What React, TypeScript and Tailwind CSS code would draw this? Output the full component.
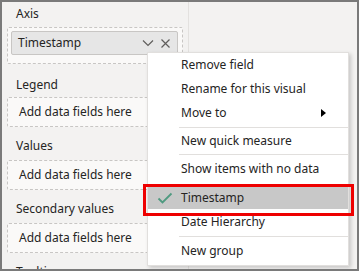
import { ReactNode } from 'react';

const font = { fontFamily: '"Segoe UI", "Noto Sans", "Liberation Sans", sans-serif' };

function Label({ children, className = '' }: { children: ReactNode; className?: string }) {
  return <div className={`h-[20px] shrink-0 pl-[9px] text-[12px] leading-[20px] text-[#252423] ${className}`}>{children}</div>;
}

function DropZone({ className = '' }: { className?: string }) {
  return (
    <div
      className={`flex h-[30px] shrink-0 items-center rounded-[2px] border border-dashed border-[#c8c6c4] bg-[#faf9f8] pl-[11px] text-[12px] text-[#252423] ${className}`}
    >
      Add data fields here
    </div>
  );
}

function MenuItem({ children, className = '' }: { children: ReactNode; className?: string }) {
  return <div className={`flex shrink-0 items-center pl-[33px] text-[12px] text-[#252423] ${className}`}>{children}</div>;
}

function Sep() {
  return <div className="ml-[31px] h-px shrink-0 bg-[#e1dfdd]" />;
}

export default function App() {
  return (
    <div className="h-[274px] w-[362px] bg-white" style={font}>
      <div className="relative h-[271px] w-[359px] overflow-hidden border-2 border-[#7a7a7a] bg-[#f3f2f1]">
        <div className="flex h-full">
          <div className="flex w-[187px] flex-col border-r border-[#e3e1df] px-[5px]">
            <Label className="mt-[2px]">Axis</Label>
            <div className="mt-[3px] h-[37px] shrink-0 rounded-[2px] border border-dashed border-[#c8c6c4] bg-[#faf9f8] pl-[3px] pr-[4px] pt-[3px]">
              <div className="flex h-[24px] items-center rounded-[2px] border border-[#c8c6c4] bg-[#e6e6e6] pl-[6px] pr-[7px] text-[12px] text-[#252423]">
                <span className="flex-1">Timestamp</span>
                <svg width="12" height="8" viewBox="0 0 12 8" className="mr-[7px]">
                  <path d="M1 1.5 L6 6.5 L11 1.5" fill="none" stroke="#605e5c" strokeWidth="1.2" />
                </svg>
                <svg width="9" height="9" viewBox="0 0 9 9">
                  <path d="M0.5 0.5 L8.5 8.5 M8.5 0.5 L0.5 8.5" fill="none" stroke="#605e5c" strokeWidth="1.2" />
                </svg>
              </div>
            </div>
            <Label className="mt-[11px]">Legend</Label>
            <DropZone className="mt-[2px]" />
            <Label className="mt-[9px]">Values</Label>
            <DropZone className="mt-[4px]" />
            <Label className="mt-[9px]">Secondary values</Label>
            <DropZone className="mt-[4px]" />
            <Label className="mt-[9px]">Tooltips</Label>
          </div>
        </div>

        {/* context menu */}
        <div className="absolute left-[145px] top-[50px] flex h-[214px] w-[202px] flex-col border border-[#e1dfdd] bg-white shadow-[2px_2px_4px_rgba(0,0,0,0.18)]">
          <MenuItem className="h-[24px]">Remove field</MenuItem>
          <MenuItem className="h-[24px]">Rename for this visual</MenuItem>
          <MenuItem className="h-[23px] justify-between pr-[22px]">
            <span>Move to</span>
            <svg width="5" height="8" viewBox="0 0 5 8">
              <path d="M0 0 L5 4 L0 8 Z" fill="#000" />
            </svg>
          </MenuItem>
          <div className="h-[3px] shrink-0" />
          <Sep />
          <MenuItem className="h-[26px]">New quick measure</MenuItem>
          <Sep />
          <MenuItem className="h-[28px]">Show items with no data</MenuItem>
          <div className="shrink-0 pb-[2px] pt-[4px]">
            <div className="flex h-[22px] items-center bg-[#c8c8c8] text-[12px] text-[#252423]">
              <svg width="16" height="12" viewBox="0 0 16 12" className="ml-[9px] mr-[8px]">
                <path d="M1.5 6.5 L5.5 10.5 L14.5 1.5" fill="none" stroke="#4f9a80" strokeWidth="1.8" />
              </svg>
              Timestamp
            </div>
          </div>
          <MenuItem className="h-[22px]">Date Hierarchy</MenuItem>
          <div className="h-[3px] shrink-0" />
          <Sep />
          <MenuItem className="h-[28px]">New group</MenuItem>
        </div>

        {/* annotation */}
        <div className="absolute left-[141px] top-[182px] h-[32px] w-[211px] border-[3px] border-[#ee0000]" />
      </div>
    </div>
  );
}
